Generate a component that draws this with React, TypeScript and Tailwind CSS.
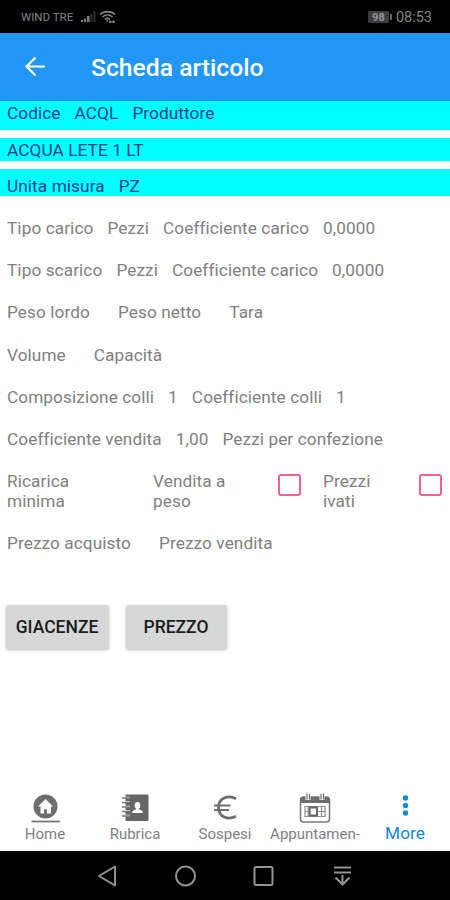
import React from 'react';
import { clsx } from 'clsx';

interface FieldRowProps {
  items: string[];
  wide?: boolean;
}

// One line of labels and values; wide rows have empty values between labels
const FieldRow: React.FC<FieldRowProps> = ({ items, wide = false }) => (
  <div className={clsx('flex h-[42.2px] items-center whitespace-nowrap', wide ? 'gap-[28px]' : 'gap-[14px]')}>
    {items.map((item, i) => (
      <span key={i}>{item}</span>
    ))}
  </div>
);

const CheckBox: React.FC = () => (
  <span
    role="checkbox"
    aria-checked="false"
    className="mt-[3px] block h-[22px] w-[23px] shrink-0 rounded-[3px] border-2 border-[#f06292]"
  />
);

const StatusBar: React.FC = () => (
  <div className="flex h-[33px] shrink-0 items-center bg-black pr-[18px] pl-[21px] text-[#858585]">
    <span className="mt-[2px] text-[11.5px]">WIND TRE</span>
    <svg className="ml-[8px] h-[12px] w-[15px]" viewBox="0 0 15 12" fill="#858585">
      <rect x="0" y="9" width="2" height="2" />
      <rect x="3" y="7.5" width="2" height="3.5" />
      <rect x="6" y="5" width="2.5" height="6" />
      <rect x="9.5" y="3" width="2" height="8" fill="#2e2e2e" />
      <rect x="12.5" y="0" width="2" height="11" fill="#2e2e2e" />
    </svg>
    <svg className="ml-[3px] h-[14px] w-[17px]" viewBox="0 0 17 14" fill="none" stroke="#858585" strokeWidth="1.6">
      <path d="M1 4.5C5 .6 12 .6 16 4.5M3.5 7C6.5 4.3 10.5 4.3 13.5 7M6 9.5c1.5-1.3 3.5-1.3 5 0" />
      <path d="M8 10v2M11 10.5v2.5M14.5 10.5v2.5M10 11.8h6" strokeWidth="1.3" />
    </svg>
    <div className="ml-auto flex items-center">
      <span className="flex h-[12px] w-[21px] items-center justify-center rounded-[1px] bg-[#3d3d3d] pt-px text-[11px] leading-none font-bold text-[#959595]">
        98
      </span>
      <span className="ml-px h-[6px] w-[2px] bg-[#666666]" />
      <span className="mt-[2px] ml-[4px] text-[14.5px]">08:53</span>
    </div>
  </div>
);

const HomeIcon = () => (
  <svg className="h-[30px] w-[30px]" viewBox="0 0 30 30">
    <circle cx="15.5" cy="13.5" r="12" fill="#6e6e6e" />
    <path d="M15.5 6l7.500 7.500h-2V20.500H17v-4h-3v4h-3.500v-7h-2.500z" fill="#fff" />
    <path d="M1.500 28.500h28.500" stroke="#777" strokeWidth="1.8" />
  </svg>
);

const ContactsIcon = () => (
  <svg className="h-[30px] w-[30px]" viewBox="0 0 30 30">
    <rect x="5.5" y="1.5" width="23" height="26.5" rx="1" fill="#666" />
    <path d="M5 4.500h5M5 9h5M5 13.500h5M5 18h5M5 22.500h5" stroke="#fff" strokeWidth="1.6" />
    <path d="M2 5h8M2 9.5h8M2 14h8M2 18.5h8M2 23h8" stroke="#777" strokeWidth="1.4" />
    <ellipse cx="17.5" cy="12.5" rx="2.8" ry="3.4" fill="#fff" />
    <path d="M16 14h3v2.5c2.8.5 4 1.5 4 3.500H12c0-2 1.200-3 4-3.500z" fill="#fff" />
  </svg>
);

const EuroIcon = () => (
  <svg className="h-[30px] w-[30px]" viewBox="0 0 30 30" fill="none" stroke="#6e6e6e" strokeWidth="2.8">
    <path d="M26 5.800C18 1.500 8.500 5 8.500 14.500S18 27.500 26 23.200" />
    <path d="M4 12.500H20.500M4 17H19" strokeWidth="2.2" />
  </svg>
);

const CalendarIcon = () => (
  <svg className="h-[30px] w-[32px]" viewBox="0 0 32 30">
    <rect x="1.5" y="4" width="29" height="25" rx="3" fill="#fff" stroke="#777" strokeWidth="1.5" />
    <path d="M1.5 10V6a2 2 0 0 1 2-2h25a2 2 0 0 1 2 2v4z" fill="#6e6e6e" />
    <path d="M9 1v6M23 1v6" stroke="#fff" strokeWidth="5" />
    <path d="M8 .5v6M10.500 1v5.500M22 1v5.500M24.500 .5v6" stroke="#6e6e6e" strokeWidth="1.2" />
    <path d="M6 13.500h20v10H6zM6 18.500h20M22.500 13.500v10" fill="none" stroke="#909090" strokeWidth="1.2" />
    <path d="M9 13.500v10" stroke="#a0a0a0" />
    <rect x="10.500" y="14.500" width="7.500" height="8" fill="#fff" stroke="#666" strokeWidth="2" />
  </svg>
);

const MoreIcon = () => (
  <svg className="h-[30px] w-[30px]" viewBox="0 0 30 30" fill="#1488d8">
    <circle cx="15.5" cy="5" r="2.7" />
    <circle cx="15.5" cy="12.5" r="2.7" />
    <circle cx="15.5" cy="20" r="2.7" />
  </svg>
);

const tabs = [
  { label: 'Home', icon: <HomeIcon /> },
  { label: 'Rubrica', icon: <ContactsIcon /> },
  { label: 'Sospesi', icon: <EuroIcon /> },
  { label: 'Appuntamen-', icon: <CalendarIcon /> },
  { label: 'More', icon: <MoreIcon />, active: true },
];

export default function App() {
  return (
    <div className="flex h-[900px] w-[450px] flex-col overflow-hidden bg-white font-['Roboto',sans-serif]">
      <StatusBar />

      <header className="flex h-[68px] shrink-0 items-center bg-[#2196f3] pl-[25px] text-white">
        <svg className="h-[20px] w-[20px]" viewBox="0 0 20 20" fill="none" stroke="#fff" strokeWidth="2.2">
          <path d="M20 9.5H1.5M10.5 .5L1.5 9.5l9 9" />
        </svg>
        <h1 className="mt-[2px] ml-[46px] text-[24.7px] leading-none font-medium">Scheda articolo</h1>
      </header>

      <main className="flex-1 text-[17.2px] leading-[20px] tracking-[0.1px] text-[#808080]">
        <div className="flex flex-col text-[#0d3f91]">
          <div className="flex h-[29px] gap-[14px] bg-[#00ffff] pt-[2px] pl-[7px]">
            <span>Codice</span>
            <span>ACQL</span>
            <span>Produttore</span>
          </div>
          <div className="mt-[8px] flex h-[23px] items-center bg-[#00ffff] pt-px pl-[7px]">ACQUA LETE 1 LT</div>
          <div className="mt-[8px] flex h-[27px] items-end gap-[14px] bg-[#00ffff] pl-[7px]">
            <span>Unita misura</span>
            <span>PZ</span>
          </div>
        </div>

        <div className="mt-[11px] pl-[7px]">
          <FieldRow items={['Tipo carico', 'Pezzi', 'Coefficiente carico', '0,0000']} />
          <FieldRow items={['Tipo scarico', 'Pezzi', 'Coefficiente carico', '0,0000']} />
          <FieldRow items={['Peso lordo', 'Peso netto', 'Tara']} wide />
          <FieldRow items={['Volume', 'Capacità']} wide />
          <FieldRow items={['Composizione colli', '1', 'Coefficiente colli', '1']} />
          <FieldRow items={['Coefficiente vendita', '1,00', 'Pezzi per confezione']} />
          <div className="flex h-[62px] items-start pt-[11px]">
            <span className="w-[146px] pr-[70px]">Ricarica minima</span>
            <span className="w-[125px] pr-[40px]">Vendita a peso</span>
            <CheckBox />
            <span className="ml-[22px] w-[96px] pr-[40px]">Prezzi ivati</span>
            <CheckBox />
          </div>
          <FieldRow items={['Prezzo acquisto', 'Prezzo vendita']} wide />
        </div>

        <div className="mt-[41px] flex gap-[17px] pl-[5.5px] text-[17.5px] font-medium tracking-normal text-[#1c1c1c]">
          <button className="h-[44px] w-[103px] rounded-[2px] bg-[#d6d7d7] shadow-[0_1px_3px_rgba(0,0,0,0.25)]">GIACENZE</button>
          <button className="h-[44px] w-[101px] rounded-[2px] bg-[#d6d7d7] shadow-[0_1px_3px_rgba(0,0,0,0.25)]">PREZZO</button>
        </div>
      </main>

      <nav className="flex h-[58px] shrink-0 text-[#808080]">
        {tabs.map((tab) => (
          <div key={tab.label} className="flex w-[90px] flex-col items-center">
            {tab.icon}
            <span
              className={clsx(
                'leading-[20px] whitespace-nowrap',
                tab.active ? 'text-[17.3px] text-[#1488d8]' : 'mt-px text-[15px]'
              )}
            >
              {tab.label}
            </span>
          </div>
        ))}
      </nav>

      <div className="flex h-[49px] shrink-0 items-center bg-black pl-[97px]">
        <svg className="h-[24px] w-[256px]" viewBox="0 0 256 24" fill="none" stroke="#929292" strokeWidth="2">
          <path d="M18 2.5v19L2 12z" strokeLinejoin="round" />
          <circle cx="88.5" cy="12" r="9.5" />
          <rect x="157.5" y="3" width="18" height="18" rx="1.5" />
          <path d="M237 3.5h17M237 8.5h17M245.5 11v9M238.5 13.500l7 7 7-7" />
        </svg>
      </div>
    </div>
  );
}
